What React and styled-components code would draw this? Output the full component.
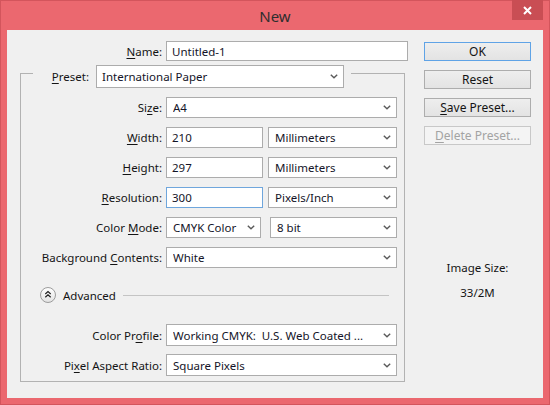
import React from "react";
import styled, { createGlobalStyle } from "styled-components";

const Global = createGlobalStyle`
  html, body { margin: 0; padding: 0; background: #ffffff; }
  body { font-family: "Noto Sans", "Open Sans", sans-serif; }
  * { box-sizing: border-box; }
`;

const Window = styled.div`
  width: 550px;
  height: 405px;
  background: #eb686f;
  border: 1px solid #d3555c;
  display: flex;
  flex-direction: column;
  position: relative;
  font-family: "Noto Sans", "Open Sans", sans-serif;
  font-size: 11.5px;
  color: #141414;
`;

const TitleBar = styled.div`
  height: 29px;
  display: flex;
  align-items: center;
  justify-content: center;
  position: relative;
`;

const Title = styled.div`
  font-size: 15px;
  color: #2e2e2e;
  margin-top: 1px;
`;

const CloseButton = styled.div`
  position: absolute;
  right: 6px;
  top: -1px;
  width: 31px;
  height: 20px;
  background: #c94e54;
  display: flex;
  align-items: center;
  justify-content: center;
`;

const Body = styled.div`
  flex: 1;
  margin: 0 6px 6px 6px;
  background: #f0f0f0;
  display: flex;
  padding: 11px 12px 0 0;
`;

const LeftCol = styled.div`
  width: 401px;
  display: flex;
  flex-direction: column;
`;

const RightCol = styled.div`
  margin-left: 16px;
  width: 107px;
  display: flex;
  flex-direction: column;
  padding-top: 1px;
`;

const NameRow = styled.div`
  display: flex;
  align-items: center;
  height: 20px;
  gap: 4px;
`;

const Label = styled.div`
  width: ${(p) => p.$w || 141}px;
  text-align: right;
  white-space: nowrap;
  color: #141414;
`;

const U = styled.span`
  text-decoration: underline;
  text-underline-offset: 2px;
`;

const TextBox = styled.div`
  width: ${(p) => p.$w}px;
  height: ${(p) => p.$h || 21}px;
  background: #ffffff;
  border: 1px solid ${(p) => (p.$focus ? "#6fa6dc" : "#acacac")};
  display: flex;
  align-items: center;
  padding-left: 5px;
  color: #141428;
  white-space: nowrap;
  overflow: hidden;
`;

const Select = styled.div`
  width: ${(p) => p.$w}px;
  height: ${(p) => p.$h || 21}px;
  background: #ffffff;
  border: 1px solid #acacac;
  display: flex;
  align-items: center;
  padding: 0 5px 0 ${(p) => p.$pl || 6}px;
  color: #141428;
  white-space: nowrap;
`;

const SelectText = styled.span`
  flex: 1;
  overflow: hidden;
`;

const GroupBox = styled.div`
  margin-top: 12px;
  margin-left: 13px;
  width: 385px;
  border: 1px solid #b2b2b2;
  display: flex;
  flex-direction: column;
  padding: 0 0 5px 0;
`;

const Legend = styled.div`
  align-self: flex-start;
  margin-top: -9px;
  margin-left: 12px;
  padding-right: 7px;
  background: #f0f0f0;
  display: flex;
  align-items: center;
  gap: 7px;
`;

const Rows = styled.div`
  margin-top: ${(p) => p.$mt}px;
  display: flex;
  flex-direction: column;
  gap: ${(p) => p.$gap}px;
`;

const Row = styled.div`
  display: flex;
  align-items: center;
  gap: 4px;
  height: ${(p) => p.$h || 21}px;
`;

const Controls = styled.div`
  display: flex;
  gap: ${(p) => p.$gap}px;
`;

const AdvancedRow = styled.div`
  margin-top: 19px;
  height: 16px;
  display: flex;
  align-items: center;
  padding-left: 19px;
  padding-right: 15px;
`;

const AdvancedText = styled.span`
  margin-left: 7px;
`;

const Rule = styled.div`
  flex: 1;
  height: 1px;
  background: #c4c4c4;
  margin-left: 7px;
`;

const Button = styled.div`
  height: 19px;
  margin-bottom: 9px;
  border: 1px solid ${(p) => (p.$default ? "#5fa3e6" : p.$disabled ? "#c8c8c8" : "#adadad")};
  background: ${(p) =>
    p.$disabled ? "#f4f4f4" : "linear-gradient(#eeeeee, #e3e3e3)"};
  color: ${(p) => (p.$disabled ? "#a3a3a3" : "#141414")};
  display: flex;
  align-items: center;
  justify-content: center;
  font-size: 12px;
`;

const InfoText = styled.div`
  text-align: center;
  margin-top: ${(p) => p.$mt}px;
  line-height: 16px;
`;

const Chevron = () => (
  <svg width="8" height="5" viewBox="0 0 8 5">
    <path d="M0.8 0.8 L4 3.8 L7.2 0.8" fill="none" stroke="#5a5a5a" strokeWidth="1.4" />
  </svg>
);

const AdvancedIcon = () => (
  <svg width="16" height="16" viewBox="0 0 16 16">
    <defs>
      <linearGradient id="ag" x1="0" y1="0" x2="0" y2="1">
        <stop offset="0" stopColor="#ffffff" />
        <stop offset="1" stopColor="#e2e2e2" />
      </linearGradient>
    </defs>
    <circle cx="8" cy="8" r="7.5" fill="url(#ag)" stroke="#9c9c9c" />
    <path d="M5.3 7 L8 4.6 L10.7 7 M5.3 10.2 L8 7.8 L10.7 10.2" fill="none" stroke="#202020" strokeWidth="1.2" />
  </svg>
);

const CloseIcon = () => (
  <svg width="9" height="9" viewBox="0 0 9 9">
    <path d="M1 1 L8 8 M8 1 L1 8" stroke="#ffffff" strokeWidth="2" />
  </svg>
);

const Combo = ({ w, h, pl, children }) => (
  <Select $w={w} $h={h} $pl={pl}>
    <SelectText>{children}</SelectText>
    <Chevron />
  </Select>
);

export default function App() {
  return (
    <>
      <Global />
      <Window>
        <TitleBar>
          <Title>New</Title>
          <CloseButton>
            <CloseIcon />
          </CloseButton>
        </TitleBar>
        <Body>
          <LeftCol>
            <NameRow>
              <Label $w={155}>
                <U>N</U>ame:
              </Label>
              <TextBox $w={242} $h={20}>Untitled-1</TextBox>
            </NameRow>
            <GroupBox>
              <Legend>
                <Label $w={56}>
                  <U>P</U>reset:
                </Label>
                <Combo w={248} h={23} pl={5}>International Paper</Combo>
              </Legend>
              <Rows $mt={9} $gap={9}>
                <Row>
                  <Label>
                    Si<U>z</U>e:
                  </Label>
                  <Combo w={231}>A4</Combo>
                </Row>
                <Row>
                  <Label>
                    <U>W</U>idth:
                  </Label>
                  <Controls $gap={5}>
                    <TextBox $w={97}>210</TextBox>
                    <Combo w={129}>Millimeters</Combo>
                  </Controls>
                </Row>
                <Row>
                  <Label>
                    <U>H</U>eight:
                  </Label>
                  <Controls $gap={5}>
                    <TextBox $w={97}>297</TextBox>
                    <Combo w={129}>Millimeters</Combo>
                  </Controls>
                </Row>
                <Row>
                  <Label>
                    <U>R</U>esolution:
                  </Label>
                  <Controls $gap={5}>
                    <TextBox $w={97} $focus>
                      300
                    </TextBox>
                    <Combo w={129}>Pixels/Inch</Combo>
                  </Controls>
                </Row>
                <Row>
                  <Label>
                    Color <U>M</U>ode:
                  </Label>
                  <Controls $gap={9}>
                    <Combo w={95}>CMYK Color</Combo>
                    <Combo w={127}>8 bit</Combo>
                  </Controls>
                </Row>
                <Row>
                  <Label>
                    Background <U>C</U>ontents:
                  </Label>
                  <Combo w={231}>White</Combo>
                </Row>
              </Rows>
              <AdvancedRow>
                <AdvancedIcon />
                <AdvancedText>Advanced</AdvancedText>
                <Rule />
              </AdvancedRow>
              <Rows $mt={21} $gap={8}>
                <Row $h={22}>
                  <Label>
                    Color Pr<U>o</U>file:
                  </Label>
                  <Combo w={231} h={22}>
                    Working CMYK:&nbsp; U.S. Web Coated ...
                  </Combo>
                </Row>
                <Row $h={22}>
                  <Label>
                    Pi<U>x</U>el Aspect Ratio:
                  </Label>
                  <Combo w={231} h={22}>Square Pixels</Combo>
                </Row>
              </Rows>
            </GroupBox>
          </LeftCol>
          <RightCol>
            <Button $default>OK</Button>
            <Button>Reset</Button>
            <Button>
              <span>
                <U>S</U>ave Preset...
              </span>
            </Button>
            <Button $disabled>
              <span>
                <U>D</U>elete Preset...
              </span>
            </Button>
            <InfoText $mt={106}>Image Size:</InfoText>
            <InfoText $mt={9}>33/2M</InfoText>
          </RightCol>
        </Body>
      </Window>
    </>
  );
}
